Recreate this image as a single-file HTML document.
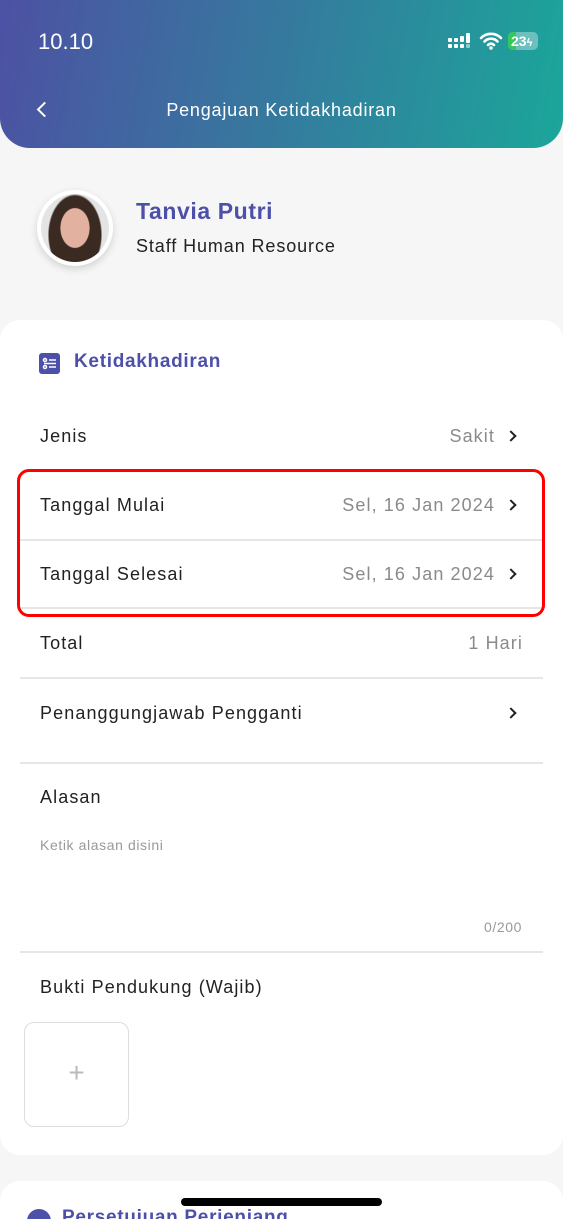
<!DOCTYPE html>
<html><head><meta charset="utf-8"><style>
*{margin:0;padding:0;box-sizing:border-box}
html,body{width:563px;height:1219px;overflow:hidden}
body{background:#f6f6f6;font-family:"Liberation Sans",sans-serif;position:relative;color:#222}
.hdr{position:absolute;left:0;top:0;width:563px;height:148px;background:linear-gradient(100deg,#4d51a3 0%,#357a9e 50%,#1ba69a 100%);border-radius:0 0 30px 30px}
.abs{position:absolute}
.card{position:absolute;left:0;width:563px;background:#fff;border-radius:20px}
.row{position:absolute;left:40px;font-size:18px;color:#222;letter-spacing:1.1px;white-space:nowrap}
.val{position:absolute;right:68px;font-size:18px;color:#8a8a8a;letter-spacing:1.1px;white-space:nowrap}
.chev{position:absolute;left:507px;width:8px;height:8px;border-right:2px solid #222;border-top:2px solid #222;transform:rotate(45deg)}
.div{position:absolute;left:20px;width:523px;height:1.5px;background:#e6e6e6}
</style></head><body>
<div class="hdr"></div>
<div class="abs" style="left:38px;top:29px;color:#fff;font-size:22px">10.10</div>
<div class="abs" style="left:448px;top:33px">
<svg width="24" height="18"><g fill="#fff"><rect x="0" y="11" width="4" height="4" rx="1"/><rect x="6" y="11" width="4" height="4" rx="1"/><rect x="12" y="11" width="4" height="4" rx="1"/><rect x="0" y="5" width="4" height="4" rx="1"/><rect x="6" y="5" width="4" height="4" rx="1"/><rect x="12" y="3" width="4" height="6" rx="1"/><rect x="18" y="0" width="4" height="10" rx="1"/><rect x="18" y="11" width="4" height="4" rx="1" opacity=".5"/></g></svg></div>
<svg class="abs" style="left:479px;top:31px" width="24" height="20" viewBox="0 0 24 20"><path d="M2 7a14 14 0 0 1 20 0M5.5 10.5a9 9 0 0 1 13 0M9 14a4 4 0 0 1 6 0" stroke="#fff" stroke-width="2.6" fill="none" stroke-linecap="round"/><circle cx="12" cy="17" r="1.8" fill="#fff"/></svg>
<div class="abs" style="left:508px;top:32px;width:30px;height:18px;border-radius:5px;background:rgba(255,255,255,.35);overflow:hidden"><div style="width:8px;height:18px;background:#35c759"></div><span style="position:absolute;left:3px;top:1px;color:#fff;font-size:14px;font-weight:bold">23<span style="font-size:11px">ϟ</span></span></div>
<div class="abs" style="left:39px;top:104px;width:11px;height:11px;border-left:2.5px solid #fff;border-bottom:2.5px solid #fff;transform:rotate(45deg)"></div>
<div class="abs" style="left:0;width:563px;top:100px;text-align:center;color:#fff;font-size:18px;letter-spacing:0.8px">Pengajuan Ketidakhadiran</div>

<div class="abs" style="left:37px;top:190px;width:76px;height:76px;border-radius:50%;background:#fff;box-shadow:0 3px 8px rgba(0,0,0,.15)"><div style="margin:4px;width:68px;height:68px;border-radius:50%;background:radial-gradient(ellipse 22% 30% at 50% 50%,#e2b1a0 0 95%,transparent 100%),radial-gradient(ellipse 40% 60% at 50% 60%,#3a2a22 0 95%,transparent 100%),#e4e4e4"></div></div>
<div class="abs" style="left:136px;top:198px;font-size:23px;font-weight:bold;color:#4d50a8;letter-spacing:0.6px">Tanvia Putri</div>
<div class="abs" style="left:136px;top:236px;font-size:18px;color:#222;letter-spacing:0.9px">Staff Human Resource</div>

<div class="card" style="top:320px;height:835px"></div>
<svg class="abs" style="left:39px;top:353px" width="22" height="22"><rect width="21" height="21" rx="3" fill="#4d50a8"/><g stroke="#fff" stroke-width="1.5" fill="none"><circle cx="6" cy="7" r="1.5"/><circle cx="6" cy="14" r="1.5"/><path d="M10 7h7M10 14h7M5 10.5h12"/></g></svg>
<div class="abs" style="left:74px;top:351px;font-size:19px;font-weight:bold;color:#4d50a8;letter-spacing:0.7px">Ketidakhadiran</div>

<div class="row" style="top:426px">Jenis</div><div class="val" style="top:426px">Sakit</div><div class="chev" style="top:432px"></div>
<div class="row" style="top:495px">Tanggal Mulai</div><div class="val" style="top:495px">Sel, 16 Jan 2024</div><div class="chev" style="top:501px"></div>
<div class="div" style="top:539px"></div>
<div class="row" style="top:564px">Tanggal Selesai</div><div class="val" style="top:564px">Sel, 16 Jan 2024</div><div class="chev" style="top:570px"></div>
<div class="div" style="top:607px"></div>
<div class="row" style="top:633px">Total</div><div class="val" style="top:633px;right:40px">1 Hari</div>
<div class="div" style="top:677px"></div>
<div class="row" style="top:703px">Penanggungjawab Pengganti</div><div class="chev" style="top:709px"></div>
<div class="div" style="top:762px"></div>
<div class="row" style="top:787px">Alasan</div>
<div class="abs" style="left:40px;top:837px;font-size:14px;color:#999;letter-spacing:0.6px">Ketik alasan disini</div>
<div class="abs" style="right:41px;top:919px;font-size:14px;color:#999;letter-spacing:0.6px">0/200</div>
<div class="div" style="top:951px"></div>
<div class="row" style="top:977px">Bukti Pendukung (Wajib)</div>
<div class="abs" style="left:24px;top:1022px;width:105px;height:105px;border:1.5px solid #ddd;border-radius:10px;text-align:center;line-height:100px;font-size:28px;color:#bbb">+</div>

<div class="abs" style="left:17px;top:469px;width:528px;height:148px;border:3px solid #f00;border-radius:12px"></div>

<div class="card" style="top:1181px;height:38px;border-radius:20px 20px 0 0"></div>
<div class="abs" style="left:27px;top:1209px;width:24px;height:24px;border-radius:50%;background:#4d50a8"></div>
<div class="abs" style="left:62px;top:1207px;font-size:19px;font-weight:bold;color:#4d50a8;letter-spacing:0.7px">Persetujuan Perjenjang</div>
<div class="abs" style="left:181px;top:1198px;width:201px;height:8px;border-radius:4px;background:#000"></div>
</body></html>
